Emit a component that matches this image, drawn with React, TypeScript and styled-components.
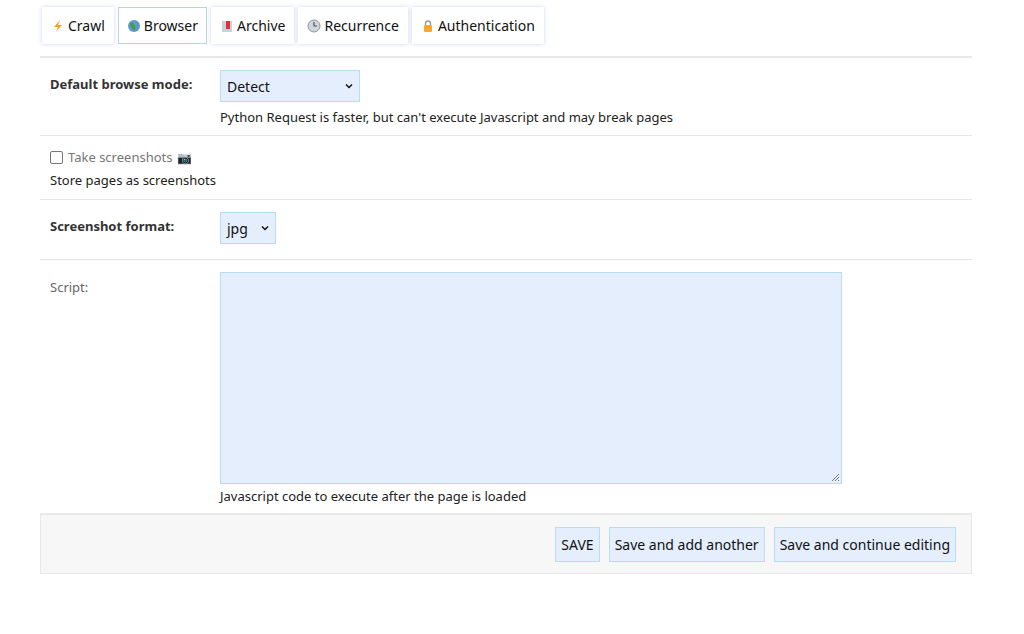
import React from "react";
import styled, { createGlobalStyle } from "styled-components";

const Global = createGlobalStyle`
  body { margin: 0; background: #fff; font-family: "Noto Sans", "Open Sans", sans-serif; color: #333; }
`;
const Wrap = styled.div`width: 932px; margin-left: 40px;`;
const Tabs = styled.div`
  display: flex; gap: 4px; padding: 7px 2px 12px; border-bottom: 2px solid #e8e8e8;
`;
const Tab = styled.div<{ $active?: boolean }>`
  height: 37px; box-sizing: border-box; padding: 0 8px; display: flex; align-items: center; gap: 3px;
  font-size: 14px; color: #111; background: #fff;
  border: 1px solid ${p => (p.$active ? "#b9d4e0" : "#fff")};
  box-shadow: ${p => (p.$active ? "none" : "0 0 4px rgba(120,130,220,0.35)")};
`;
const Row = styled.div<{ $h: number }>`
  min-height: ${p => p.$h}px; box-sizing: border-box; border-bottom: 1px solid #e6e6e6;
  display: flex; padding: 12px 10px 0;
`;
const Label = styled.div<{ $bold?: boolean }>`
  width: 170px; font-size: 13px; font-weight: ${p => (p.$bold ? 700 : 400)};
  color: ${p => (p.$bold ? "#333" : "#666")}; padding-top: ${p => (p.$bold ? 5 : 6)}px;
`;
const Field = styled.div`display: flex; flex-direction: column; align-items: flex-start;`;
const Select = styled.div<{ $w: number }>`
  width: ${p => p.$w}px; height: 32px; box-sizing: border-box; background: #e5eefd; border: 1px solid #b5def0;
  display: flex; align-items: center; justify-content: space-between; padding: 0 5px 0 6px; font-size: 14px; color: #111;
`;
const Help = styled.div`font-size: 13px; color: #222; margin-top: 6px;`;
const Check = styled.div`display: flex; align-items: center; gap: 5px; font-size: 13px; color: #777;`;
const Box = styled.span`width: 11px; height: 11px; border: 1.5px solid #777; border-radius: 2px; display: inline-block;`;
const Area = styled.div`
  width: 622px; height: 212px; box-sizing: border-box; background: #e5eefd; border: 1px solid #b5def0; position: relative;
`;
const Grip = styled.svg`position: absolute; right: 1px; bottom: 1px;`;
const Submit = styled.div`
  height: 61px; box-sizing: border-box; background: #f7f7f7; border: 1px solid #e8e8e8; border-top: 2px solid #e8e8e8;
  display: flex; justify-content: flex-end; align-items: center; gap: 9px; padding: 0 15px 0;
`;
const Btn = styled.div`
  height: 35px; box-sizing: border-box; padding: 0 5px; display: flex; align-items: center;
  background: #e5eefd; border: 1px solid #b5def0; font-size: 14px; color: #111;
`;
const Chev = () => (
  <svg width="10" height="10" viewBox="0 0 10 10"><path d="M2 3.5 L5 6.5 L8 3.5" fill="none" stroke="#111" strokeWidth="1.5" /></svg>
);
const Ico = styled.svg`width: 14px; height: 14px;`;

export default function App() {
  return (
    <Wrap>
      <Global />
      <Tabs>
        <Tab><Ico viewBox="0 0 14 14"><path d="M9 1 L3 8 H7 L5 13 L11 6 H7 Z" fill="#f7a21b" /></Ico>Crawl</Tab>
        <Tab $active><Ico viewBox="0 0 14 14"><circle cx="7" cy="7" r="6" fill="#5b9bd5" /><path d="M3 4 Q6 3 7 6 Q9 7 8 11 Q6 12 5 9 Q3 7 3 4Z M9 2 Q12 4 12 7 Q10 5 9 2Z" fill="#4c9a3a" /></Ico>Browser</Tab>
        <Tab><Ico viewBox="0 0 14 14"><rect x="2" y="2" width="10" height="11" fill="#c9d3dc" /><rect x="6" y="2" width="4" height="8" fill="#e0303a" /></Ico>Archive</Tab>
        <Tab><Ico viewBox="0 0 14 14"><circle cx="7" cy="7" r="6" fill="#cfd6dc" stroke="#8a96a0" /><path d="M7 3 V7 H10" stroke="#555" fill="none" strokeWidth="1.2" /></Ico>Recurrence</Tab>
        <Tab><Ico viewBox="0 0 14 14"><path d="M4.5 6 V4.5 A2.5 2.5 0 0 1 9.5 4.5 V6" stroke="#999" fill="none" strokeWidth="1.4" /><rect x="3" y="6" width="8" height="7" rx="1" fill="#f8a82b" /></Ico>Authentication</Tab>
      </Tabs>
      <Row $h={78}>
        <Label $bold>Default browse mode:</Label>
        <Field>
          <Select $w={140}>Detect<Chev /></Select>
          <Help>Python Request is faster, but can't execute Javascript and may break pages</Help>
        </Field>
      </Row>
      <Row $h={64}>
        <Field>
          <Check><Box />Take screenshots <span style={{ fontSize: 12 }}>📷</span></Check>
          <Help style={{ marginTop: 5 }}>Store pages as screenshots</Help>
        </Field>
      </Row>
      <Row $h={60}>
        <Label $bold>Screenshot format:</Label>
        <Select $w={56}>jpg<Chev /></Select>
      </Row>
      <Row $h={253} style={{ borderBottom: "none" }}>
        <Label>Script:</Label>
        <Field>
          <Area><Grip width="10" height="10" viewBox="0 0 10 10"><path d="M9 2 L2 9 M9 5 L5 9 M9 8 L8 9" stroke="#777" /></Grip></Area>
          <Help style={{ marginTop: 3 }}>Javascript code to execute after the page is loaded</Help>
        </Field>
      </Row>
      <Submit>
        <Btn>SAVE</Btn>
        <Btn>Save and add another</Btn>
        <Btn>Save and continue editing</Btn>
      </Submit>
    </Wrap>
  );
}
